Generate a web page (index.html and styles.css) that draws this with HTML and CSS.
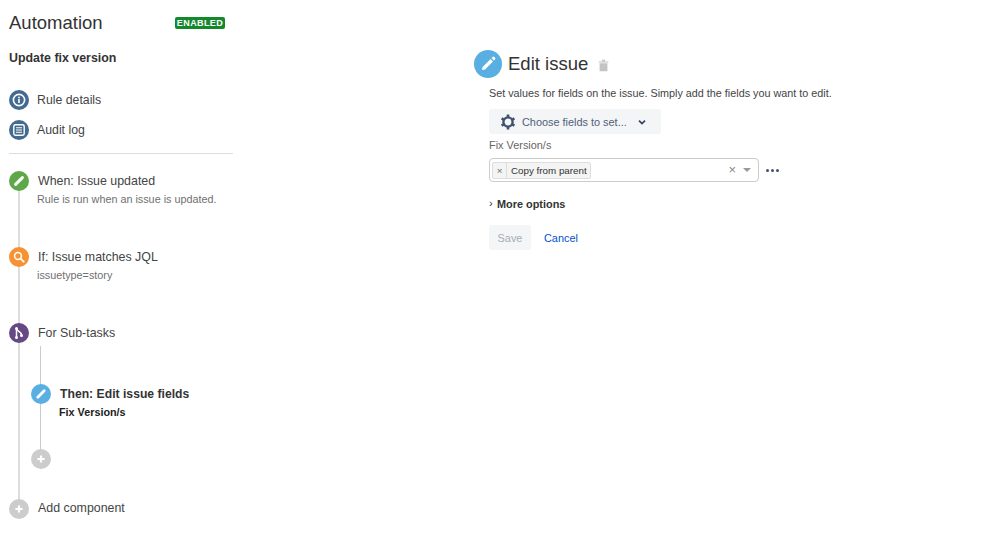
FILE: index.html
```html
<!DOCTYPE html>
<html lang="en">
<head>
<meta charset="utf-8">
<title>Automation</title>
<link rel="stylesheet" href="styles.css">
</head>
<body>
<div class="page">
  <aside class="sidebar">
    <header class="head">
      <h1 class="title">Automation</h1>
      <span class="lozenge">ENABLED</span>
    </header>
    <h2 class="rule-name">Update fix version</h2>
    <nav class="links">
      <a class="link">
        <span class="dot dot-slate"><svg viewBox="0 0 20 20" class="ic"><circle cx="10" cy="10" r="5.6" fill="none" stroke="#fff" stroke-width="1.6"/><rect x="9.2" y="9" width="1.6" height="4" fill="#fff"/><rect x="9.2" y="6.7" width="1.6" height="1.6" fill="#fff"/></svg></span>
        <span>Rule details</span>
      </a>
      <a class="link">
        <span class="dot dot-slate"><svg viewBox="0 0 20 20" class="ic"><rect x="4.8" y="4.8" width="10.4" height="10.4" rx="1.6" fill="none" stroke="#fff" stroke-width="1.4"/><path d="M7 7.8h6M7 10h6M7 12.2h6" stroke="#fff" stroke-width="1.1"/></svg></span>
        <span>Audit log</span>
      </a>
    </nav>
    <div class="timeline">
      <div class="step step-when">
        <span class="dot dot-green"><svg viewBox="0 0 20 20" class="ic"><path d="M6.6 13.4 13.4 6.6" stroke="#fff" stroke-width="3" stroke-linecap="round"/></svg></span>
        <div class="step-body">
          <div class="step-title">When: Issue updated</div>
          <div class="step-desc">Rule is run when an issue is updated.</div>
        </div>
      </div>
      <div class="step step-if">
        <span class="dot dot-orange"><svg viewBox="0 0 20 20" class="ic"><circle cx="9" cy="9" r="3.4" fill="none" stroke="#fff" stroke-width="1.5"/><path d="m11.6 11.6 3 3" stroke="#fff" stroke-width="2" stroke-linecap="round"/></svg></span>
        <div class="step-body">
          <div class="step-title">If: Issue matches JQL</div>
          <div class="step-desc">issuetype=story</div>
        </div>
      </div>
      <div class="step step-for">
        <span class="dot dot-purple"><svg viewBox="0 0 20 20" class="ic"><path d="M7.5 5.5v9M7.5 5.5c0 3 5 3 5 6.5" fill="none" stroke="#fff" stroke-width="1.5"/><circle cx="7.5" cy="5.5" r="1.5" fill="#fff"/><circle cx="7.5" cy="14.5" r="1.5" fill="#fff"/><circle cx="12.5" cy="12.5" r="1.5" fill="#fff"/></svg></span>
        <div class="step-body">
          <div class="step-title">For Sub-tasks</div>
        </div>
      </div>
      <div class="branch">
        <div class="step step-then">
          <span class="dot dot-blue"><svg viewBox="0 0 20 20" class="ic"><path d="M6.8 13.2 13.2 6.8" stroke="#fff" stroke-width="2.8" stroke-linecap="round"/></svg></span>
          <div class="step-body">
            <div class="step-title strong">Then: Edit issue fields</div>
            <div class="step-desc strong-desc">Fix Version/s</div>
          </div>
        </div>
        <div class="step step-add-inner">
          <span class="dot dot-grey"><svg viewBox="0 0 20 20" class="ic"><path d="M10 6.4v7.2M6.4 10h7.2" stroke="#fff" stroke-width="2.2"/></svg></span>
        </div>
      </div>
      <div class="step step-add">
        <span class="dot dot-grey"><svg viewBox="0 0 20 20" class="ic"><path d="M10 6.4v7.2M6.4 10h7.2" stroke="#fff" stroke-width="2.2"/></svg></span>
        <div class="step-body">
          <div class="step-title">Add component</div>
        </div>
      </div>
    </div>
  </aside>
  <main class="editor">
    <div class="editor-head">
      <span class="big-dot"><svg viewBox="0 0 28 28" class="ic"><path d="M8.6 19.4 8 20l.6-3 8-8 2.4 2.4-8 8-3 .6z" fill="#fff"/><path d="m17.6 8 1-1a1.2 1.2 0 0 1 1.7 0l.7.7a1.2 1.2 0 0 1 0 1.7l-1 1z" fill="#fff"/></svg></span>
      <h2 class="editor-title">Edit issue</h2>
      <svg viewBox="0 0 12 12" class="trash"><path d="M1.5 2.2h9v1.1h-9zM4.5 .8h3v1.2h-3zM2.4 4h7.2v7.4H2.4z" fill="#c4c4c4"/></svg>
    </div>
    <div class="editor-body">
      <p class="intro">Set values for fields on the issue. Simply add the fields you want to edit.</p>
      <button class="choose" type="button">
        <svg viewBox="0 0 16 16" class="gear"><circle cx="8" cy="8" r="4.6" fill="none" stroke="#42526e" stroke-width="2.4"/><path d="M8 .6v3M8 12.4v3M1.6 4.3l2.6 1.5M11.8 10.2l2.6 1.5M1.6 11.7l2.6-1.5M11.8 5.8l2.6-1.5" stroke="#42526e" stroke-width="2.6"/></svg>
        <span>Choose fields to set...</span>
        <svg viewBox="0 0 10 10" class="chev"><path d="m2 3.6 3 3 3-3" fill="none" stroke="#344563" stroke-width="1.7"/></svg>
      </button>
      <label class="field-label">Fix Version/s</label>
      <div class="field-row">
        <div class="select">
          <span class="tag"><span class="tag-x">×</span><span class="tag-text">Copy from parent</span></span>
          <span class="clear">×</span>
          <span class="caret"></span>
        </div>
        <span class="more"><i></i><i></i><i></i></span>
      </div>
      <div class="more-options"><span class="arrow">›</span><span>More options</span></div>
      <div class="actions">
        <button class="save" type="button">Save</button>
        <a class="cancel">Cancel</a>
      </div>
    </div>
  </main>
</div>
</body>
</html>
```

FILE: styles.css
```css
* { box-sizing: border-box; }
html, body { margin: 0; padding: 0; background: #fff; }
body { font-family: "Liberation Sans", Arial, sans-serif; color: #172b4d; overflow: hidden; }
.page { display: flex; width: 999px; height: 555px; }

.sidebar { width: 233px; margin-left: 9px; flex: none; padding-top: 11px; }
.head { display: flex; align-items: center; justify-content: space-between; width: 216px; height: 24px; }
.title { margin: 0; font-size: 18.5px; font-weight: 400; color: #333; line-height: 24px; }
.lozenge { background: #14892c; color: #fff; font-size: 9px; font-weight: 700; letter-spacing: .4px; border-radius: 2px; height: 12px; line-height: 12px; width: 50px; text-align: center; }
.rule-name { margin: 11px 0 0; font-size: 12.4px; font-weight: 700; color: #333; line-height: 24px; height: 24px; }

.links { margin-top: 20px; padding-bottom: 13px; border-bottom: 1px solid #ddd; width: 224px; display: flex; flex-direction: column; gap: 10px; }
.link { display: flex; align-items: center; height: 20px; gap: 8px; font-size: 12.3px; color: #444; }

.dot { width: 20px; height: 20px; border-radius: 50%; flex: none; display: block; position: relative; z-index: 1; }
.ic { display: block; width: 100%; height: 100%; }
.dot-slate { background: #456a8f; }
.dot-green { background: #5ea84a; }
.dot-orange { background: #f79232; }
.dot-purple { background: #654982; }
.dot-blue { background: #59afe1; }
.dot-grey { background: #ccc; }

.timeline { position: relative; margin-top: 17px; }
.timeline::before { content: ""; position: absolute; left: 9px; top: 10px; bottom: 12px; width: 2px; background: #ddd; }
.step { display: flex; gap: 9px; position: relative; }
.step-body { padding-top: 1px; min-width: 0; }
.step-title { font-size: 12.4px; line-height: 18px; color: #444; }
.step-desc { font-size: 10.8px; line-height: 14px; color: #707070; margin-top: 2px; margin-left: -1px; }
.step-when { height: 76px; }
.step-if { height: 76px; }
.step-for { height: 47px; }

.branch { margin-left: 22px; position: relative; height: 129px; }
.branch::before { content: ""; position: absolute; left: 9px; top: -24px; height: 105px; width: 1px; background: #ccc; }
.step-then { padding-top: 14px; height: 79px; }
.strong { font-size: 12.2px; font-weight: 700; color: #333; }
.strong-desc { font-weight: 700; color: #222; margin-left: -1px; }
.step-add .step-body { padding-top: 0; }

.editor { margin-left: 232px; padding-top: 50px; width: 360px; flex: none; }
.editor-head { display: flex; align-items: center; height: 28px; }
.big-dot { width: 28px; height: 28px; border-radius: 50%; background: #59afe1; flex: none; }
.editor-title { margin: 0 0 0 6px; font-size: 18.5px; font-weight: 400; color: #333; line-height: 28px; }
.trash { width: 13px; height: 13px; margin: 2px 0 0 9px; }
.editor-body { padding-left: 15px; }
.intro { margin: 8px 0 0; font-size: 10.8px; line-height: 14px; color: #444; white-space: nowrap; }
.choose { display: flex; align-items: center; margin-top: 9px; width: 172px; height: 25px; padding: 0 0 0 11px; border: 0; border-radius: 3px; background: #f4f5f7; color: #505f79; font: inherit; font-size: 10.9px; }
.gear { width: 16px; height: 16px; flex: none; margin-right: 6px; }
.chev { width: 10px; height: 10px; margin-left: 10px; }
.field-label { display: block; margin-top: 4px; font-size: 10.9px; line-height: 14px; color: #666; }
.field-row { display: flex; align-items: center; margin-top: 6px; }
.select { display: flex; align-items: center; width: 270px; height: 24px; padding-left: 2px; padding-right: 7px; border: 1px solid #ccc; border-radius: 4px; background: #fff; }
.tag { display: flex; height: 17px; border: 1px solid #ddd; border-radius: 2px; background: #f4f4f4; font-size: 9.8px; line-height: 15px; color: #333; }
.tag-x { width: 14px; text-align: center; border-right: 1px solid #ddd; color: #666; }
.tag-text { padding: 0 3px 0 4px; }
.clear { margin-left: auto; font-size: 13px; line-height: 14px; color: #888; }
.caret { margin-left: 7px; margin-top: -1px; width: 0; height: 0; border-left: 4px solid transparent; border-right: 4px solid transparent; border-top: 4px solid #999; }
.more { display: flex; gap: 2px; margin-left: 7px; }
.more i { width: 3px; height: 3px; border-radius: 50%; background: #42526e; display: block; }
.more-options { display: flex; align-items: center; margin-top: 15px; font-size: 10.9px; font-weight: 700; line-height: 14px; color: #333; }
.arrow { width: 8px; font-weight: 400; margin-top: -3px; font-size: 11px; }
.actions { display: flex; align-items: center; margin-top: 14px; gap: 13px; }
.save { width: 42px; height: 25px; border: 0; border-radius: 3px; background: #f4f5f7; color: #a5adba; font: inherit; font-size: 10.9px; padding: 0; }
.cancel { font-size: 10.9px; color: #0052cc; }
```
